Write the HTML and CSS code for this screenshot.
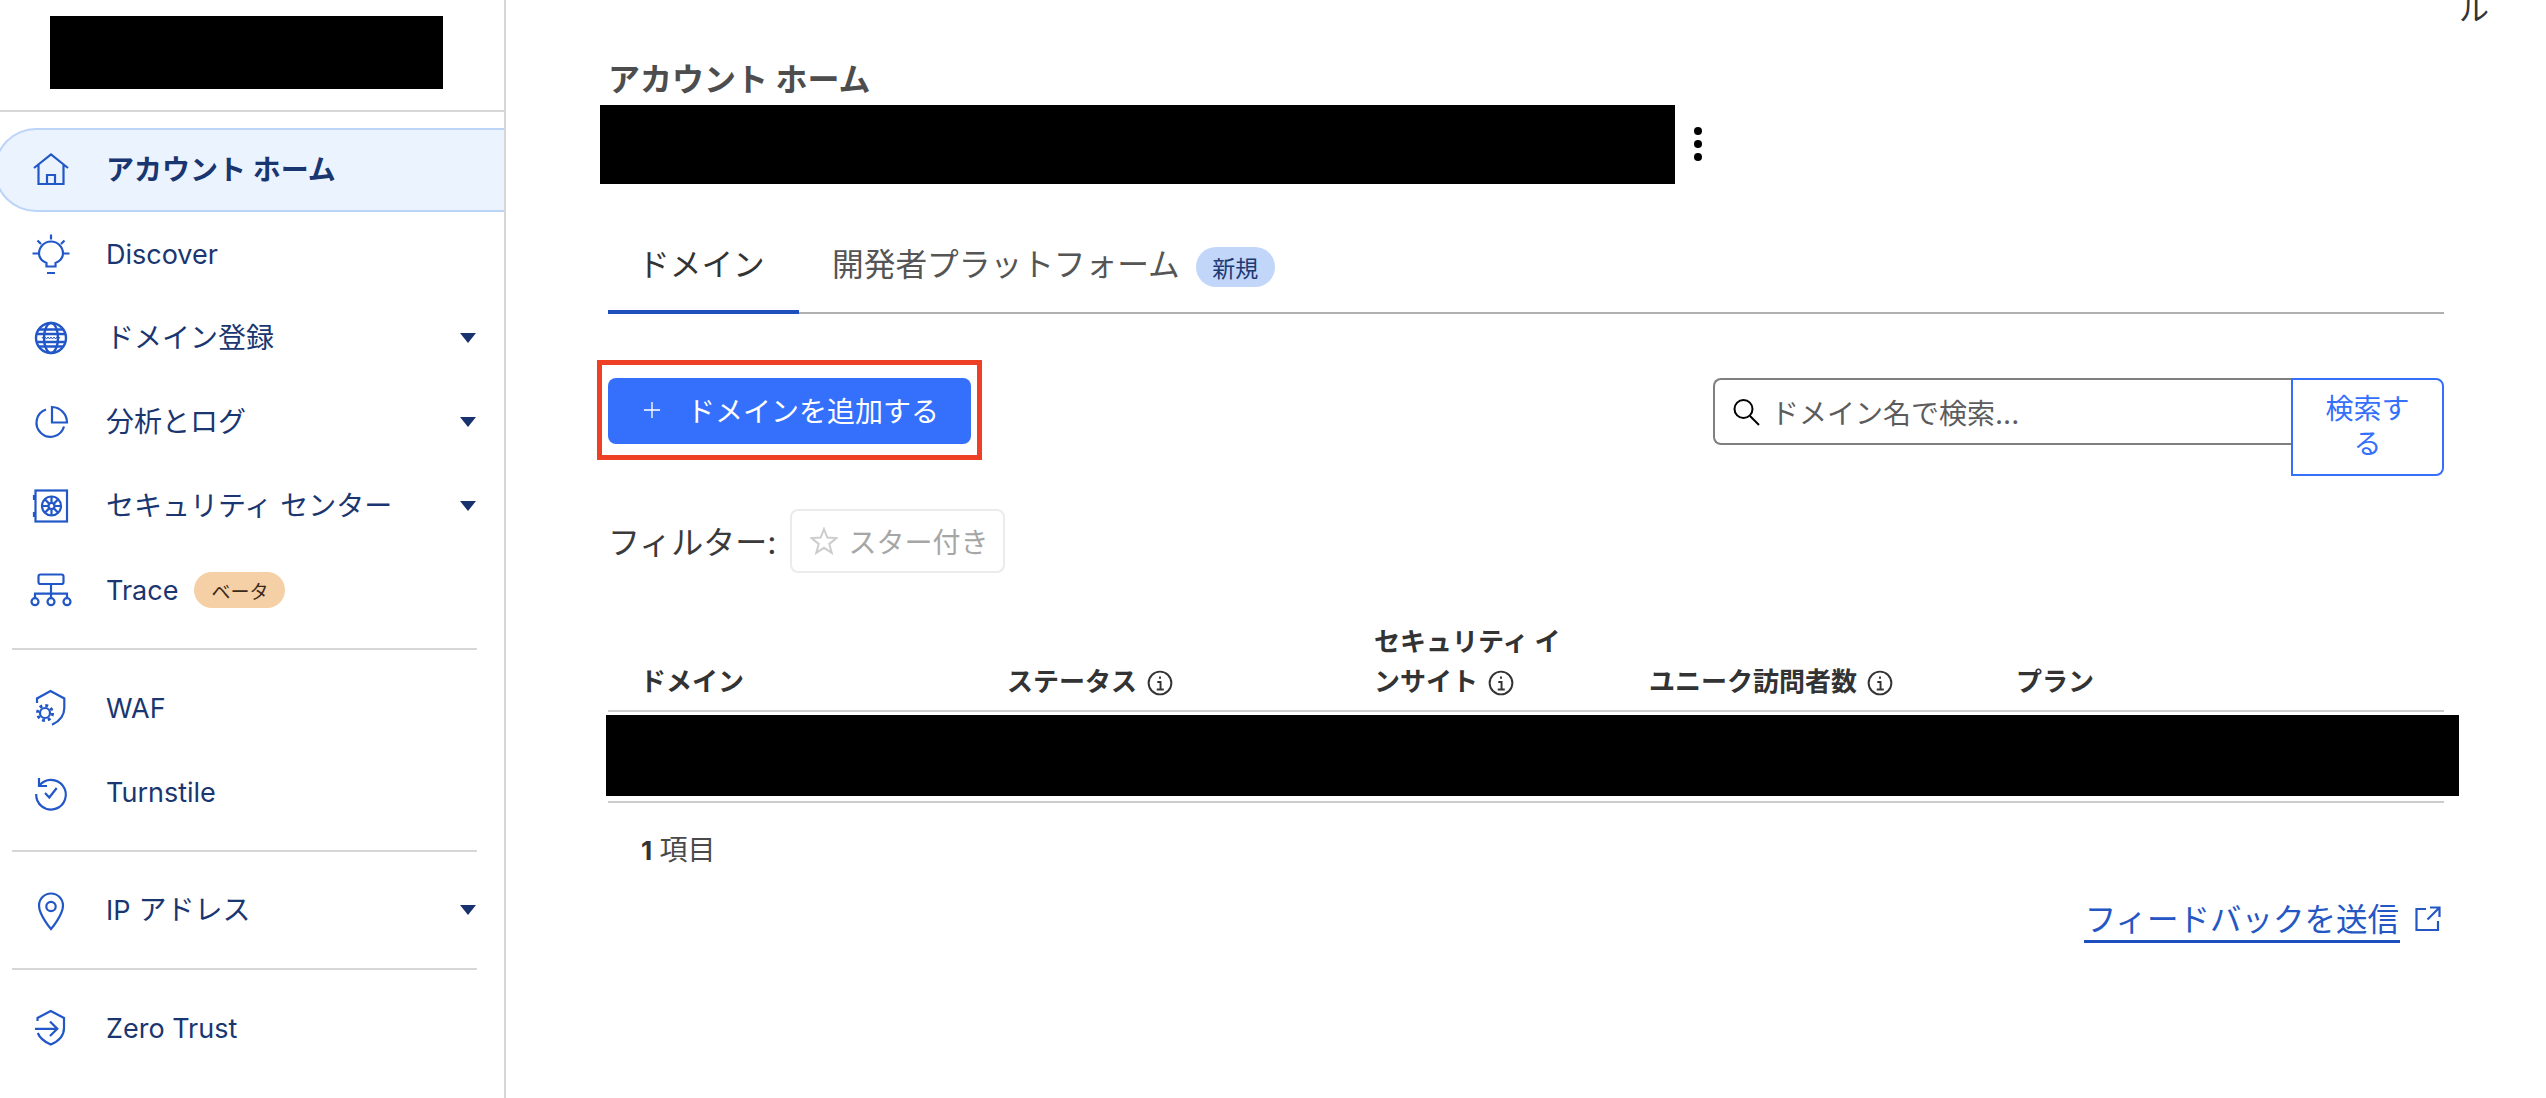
FILE: index.html
```html
<!DOCTYPE html>
<html lang="ja">
<head>
<meta charset="utf-8">
<title>アカウント ホーム</title>
<link rel="stylesheet" href="styles.css">
</head>
<body>
<div class="app">
  <aside class="sidebar">
    <div class="logo-wrap"><div class="redact logo"></div></div>
    <nav class="nav">
      <a class="nav-item active">
        <svg class="nav-icon" viewBox="0 0 44 44"><path d="M5 20 22 6.500 39 20M9.500 17V36H34.500V17M18 36V27H26V36"/></svg>
        <span class="nav-label">アカウント ホーム</span>
      </a>
      <a class="nav-item">
        <svg class="nav-icon" viewBox="0 0 44 44"><path d="M17.500 34.500V31C13 29 10 26 10 21.500A12 12 0 0 1 34 21.500C34 26 31 29 26.500 31V34.500ZM18 41H26M22 2.500V7.500M3.500 21.500H9M35 21.500H40.500M8.500 8.500 12 12M35.500 8.500 32 12"/></svg>
        <span class="nav-label latin">Discover</span>
      </a>
      <a class="nav-item">
        <svg class="nav-icon heavy" viewBox="0 0 44 44"><circle cx="22" cy="22" r="15"/><ellipse cx="22" cy="22" rx="7" ry="15"/><path d="M10 13.500H34M10 30.500H34M7 18H37M7 26H37"/><path class="thin" d="M13 21 14.500 23 16 21 17.500 23 19 21 20.500 23 22 21 23.500 23 25 21 26.500 23 28 21 29.500 23 31 21"/></svg>
        <span class="nav-label">ドメイン登録</span>
        <span class="caret"></span>
      </a>
      <a class="nav-item">
        <svg class="nav-icon" viewBox="0 0 44 44"><path d="M23 22.500V7A15.500 15.500 0 0 1 38 22.500ZM17 9.500A14 14 0 1 0 35 26.500"/></svg>
        <span class="nav-label">分析とログ</span>
        <span class="caret"></span>
      </a>
      <a class="nav-item">
        <svg class="nav-icon" viewBox="0 0 44 44"><rect x="6.500" y="6.500" width="31.500" height="31"/><circle cx="22.500" cy="22" r="9.500"/><circle cx="22.500" cy="22" r="3"/><path d="M22.500 12.500V19M22.500 25V31.500M13 22H19.500M25.500 22H32M15.800 15.300 20.400 19.900M24.600 24.100 29.200 28.700M29.200 15.300 24.600 19.900M20.400 24.100 15.800 28.700M5 11V16M5 28V33"/></svg>
        <span class="nav-label">セキュリティ センター</span>
        <span class="caret"></span>
      </a>
      <a class="nav-item">
        <svg class="nav-icon" viewBox="0 0 44 44"><rect x="9.500" y="6.500" width="25" height="9.500" rx="2"/><path d="M22 16V30M6 30V25.700H38V30"/><circle cx="6" cy="33.700" r="3.500"/><circle cx="22" cy="33.700" r="3.500"/><circle cx="38" cy="33.700" r="3.500"/></svg>
        <span class="nav-label latin">Trace</span>
        <span class="beta">ベータ</span>
      </a>
      <div class="nav-divider"></div>
      <a class="nav-item">
        <svg class="nav-icon" viewBox="0 0 44 44"><path d="M8 17V12.500L21.500 5 35.300 12.500V22C35.300 30 30 35.500 23 38.800"/><circle cx="16" cy="27" r="5"/><circle class="teeth" cx="16" cy="27" r="7.500"/></svg>
        <span class="nav-label latin">WAF</span>
      </a>
      <a class="nav-item">
        <svg class="nav-icon" viewBox="0 0 44 44"><path d="M10 8V16H18M10 16A14.800 14.800 0 1 1 7.200 24M16 23 20.300 27.500 27.700 18"/></svg>
        <span class="nav-label latin">Turnstile</span>
      </a>
      <div class="nav-divider"></div>
      <a class="nav-item">
        <svg class="nav-icon" viewBox="0 0 44 44"><path d="M22 41C22 41 10 27 10 17.500A12 12 0 0 1 34 17.500C34 27 22 41 22 41Z"/><circle cx="22" cy="18.500" r="4.700"/></svg>
        <span class="nav-label"><span class="latin">IP</span> アドレス</span>
        <span class="caret"></span>
      </a>
      <div class="nav-divider"></div>
      <a class="nav-item last">
        <svg class="nav-icon" viewBox="0 0 44 44"><path d="M8.500 15V12L21.700 5 35 12V22C35 30 29 35.500 21.700 38.600 15 35.500 10.500 31.500 8.800 27M6 22.800H28M21 15.500 28.300 22.800 21 30"/></svg>
        <span class="nav-label latin">Zero Trust</span>
      </a>
    </nav>
  </aside>

  <main class="content">
    <span class="corner-text">ル</span>
    <h1 class="page-title">アカウント ホーム</h1>
    <div class="account-row">
      <div class="redact account-name"></div>
      <div class="kebab"><i></i><i></i><i></i></div>
    </div>

    <div class="tabs">
      <a class="tab active">ドメイン</a>
      <a class="tab">開発者プラットフォーム<span class="new-badge">新規</span></a>
    </div>

    <div class="toolbar">
      <button class="add-btn">
        <svg class="plus" viewBox="0 0 20 20"><path d="M10 1V19M1 10H19"/></svg>
        <span>ドメインを追加する</span>
        <span class="mark"></span>
      </button>
      <div class="search">
        <div class="search-input">
          <svg class="search-icon" viewBox="0 0 28 28"><circle cx="11.500" cy="11" r="9"/><path d="M18 18 27 27"/></svg>
          <span>ドメイン名で検索...</span>
        </div>
        <button class="search-btn">検索する</button>
      </div>
    </div>

    <div class="filters">
      <span class="filter-label">フィルター:</span>
      <button class="star-btn">
        <svg class="star" viewBox="0 0 28 28"><path d="M14 2 17.300 10.600 26.500 11.100 19.300 16.900 21.700 25.800 14 20.800 6.300 25.800 8.700 16.900 1.500 11.100 10.700 10.600Z"/></svg>
        <span>スター付き</span>
      </button>
    </div>

    <div class="table-head">
      <div class="th">ドメイン</div>
      <div class="th">ステータス<svg class="info" viewBox="0 0 24 24"><circle cx="12" cy="12" r="10.500"/><path d="M12 6V8M9.500 11H12.500V18M9 18H15.500"/></svg></div>
      <div class="th">セキュリティ イ<br>ンサイト<svg class="info" viewBox="0 0 24 24"><circle cx="12" cy="12" r="10.500"/><path d="M12 6V8M9.500 11H12.500V18M9 18H15.500"/></svg></div>
      <div class="th">ユニーク訪問者数<svg class="info" viewBox="0 0 24 24"><circle cx="12" cy="12" r="10.500"/><path d="M12 6V8M9.500 11H12.500V18M9 18H15.500"/></svg></div>
      <div class="th">プラン</div>
    </div>
    <div class="redact table-row"></div>
    <div class="table-end"></div>
    <div class="count"><b>1</b> <span class="count-unit">項目</span></div>

    <div class="feedback">
      <a class="feedback-link">フィードバックを送信</a>
      <svg class="external" viewBox="0 0 26 26"><path d="M11 3H1.500V24H23V15M15 1.500H24.500V11M24 2 12.500 13.500"/></svg>
    </div>
  </main>
</div>
</body>
</html>
```
FILE: styles.css
```css
* { box-sizing: border-box; }
html, body { margin: 0; height: 100%; background: #fff; overflow: hidden; }
body { font-family: Inter, "Noto Sans CJK JP", sans-serif; color: #333; }
.app { display: flex; height: 1098px; }
.redact { background: #000; }

.sidebar { width: 506px; flex: none; border-right: 2px solid #d6d6d6; overflow: hidden; }
.logo-wrap { height: 112px; padding: 16px 0 0 50px; border-bottom: 2px solid #d6d6d6; }
.logo { width: 393px; height: 73px; }
.nav { padding-top: 16px; }
.nav-item { display: flex; align-items: center; height: 84px; padding-left: 29px; color: #1a3670; position: relative; }
.nav-item.active { margin-left: -6px; background: #ebf3ff; border: 2px solid #bcd4f7; border-right: 0; border-radius: 42px 0 0 42px; padding-left: 33px; font-weight: 700; }
.nav-item.last { height: 80px; padding-top: 4px; }
.nav-icon { width: 44px; height: 44px; flex: none; fill: none; stroke: #2257c7; stroke-width: 2.200; margin-right: 33px; }
.nav-icon.heavy { stroke-width: 2.400; }
.nav-icon .thin { stroke-width: 1; }
.nav-icon .teeth { stroke-dasharray: 2.900 3; stroke-width: 3; }
.nav-label { font-size: 28px; line-height: 40px; }
.latin { font-size: 27px; }
.nav-label.latin { padding-top: 2px; }
.nav-divider { height: 2px; margin: 16px 27px 16px 12px; background: #d6d6d6; }
.caret { position: absolute; left: 460px; top: 37px; width: 0; height: 0; border-left: 8px solid transparent; border-right: 8px solid transparent; border-top: 10px solid #17326e; }
.beta { margin-left: 16px; width: 91px; height: 36px; border-radius: 18px; background: #f5cfa6; color: #3b2a1a; font-size: 19px; display: flex; align-items: center; justify-content: center; }

.content { flex: 1; min-width: 0; padding: 60px 102px 0; position: relative; }
.corner-text { position: absolute; left: 1953px; top: -11px; font-size: 30px; line-height: 40px; color: #333; }
.page-title { margin: 0 0 5px; font-size: 32px; line-height: 40px; font-weight: 700; color: #4d4d4d; }
.account-row { display: flex; align-items: center; margin-left: -8px; height: 79px; }
.account-name { width: 1075px; height: 79px; }
.kebab { display: flex; flex-direction: column; gap: 4.700px; margin: -1px 0 0 19px; }
.kebab i { display: block; width: 8px; height: 8px; border-radius: 50%; background: #000; }

.tabs { display: flex; margin-top: 36px; border-bottom: 2px solid #b0b0b0; height: 94px; }
.tab { display: flex; align-items: center; height: 94px; padding: 0 33px 11px; font-size: 31.700px; color: #555; }
.tab.active { width: 191px; padding: 0 0 7px 30px; height: 94px; border-bottom: 4px solid #1f4fbf; color: #333; }
.new-badge { margin: 11px 0 0 16px; width: 79px; height: 40px; border-radius: 20px; background: #c2d6fa; color: #1d3a72; font-size: 23px; display: flex; align-items: center; justify-content: center; }

.toolbar { display: flex; justify-content: space-between; align-items: flex-start; margin-top: 64px; }
button { font-family: inherit; padding: 0; margin: 0; background: none; border: 0; }
.add-btn { position: relative; display: flex; align-items: center; width: 363px; height: 66px; padding: 0 0 2px 35px; background: #3470fb; border-radius: 8px; color: #fff; font-size: 28px; }
.plus { width: 18px; height: 18px; margin-right: 26px; fill: none; stroke: #fff; stroke-width: 1.500; }
.mark { position: absolute; left: -11px; right: -11px; top: -18px; bottom: -16px; border: 5px solid #ed4024; }
.search { display: flex; align-items: flex-start; }
.search-input { display: flex; align-items: center; width: 578px; height: 67px; padding: 0 0 0 17px; border: 2px solid #7f7f7f; border-right: 0; border-radius: 8px 0 0 8px; color: #5c5c5c; font-size: 28px; }
.search-icon { width: 28px; height: 28px; margin-right: 11px; fill: none; stroke: #000; stroke-width: 2; }
.search-btn { width: 153px; height: 98px; padding: 0 30px; border: 2px solid #3470fb; border-radius: 0 8px 8px 0; color: #3470fb; font-size: 28px; line-height: 35px; text-align: center; }

.filters { display: flex; align-items: center; gap: 13px; margin-top: 33px; }
.filter-label { font-size: 32px; color: #3a3a3a; padding-bottom: 2px; }
.star-btn { display: flex; align-items: center; width: 215px; height: 64px; padding-left: 18px; gap: 11px; border: 2px solid #ebebeb; border-radius: 8px; color: #a6a6a6; font-size: 28px; }
.star { width: 28px; height: 28px; fill: none; stroke: #ccc; stroke-width: 2; }

.table-head { display: grid; grid-template-columns: 367px 367px 275px 367px 1fr; align-items: end; margin-top: 49px; padding-bottom: 8px; border-bottom: 2px solid #ccc; }
.th { padding-left: 32px; font-size: 26px; line-height: 40px; font-weight: 700; color: #333; }
.info { width: 26px; height: 26px; margin-left: 10px; vertical-align: -5px; fill: none; stroke: #333; stroke-width: 1.800; }
.table-row { height: 81px; margin: 3px -15px 0 -2px; }
.table-end { height: 2px; margin-top: 5px; background: #ccc; }
.count { margin-top: 27px; padding-left: 33px; font-size: 26px; line-height: 40px; color: #4a4a4a; }
.count b { color: #333; }
.count-unit { font-size: 28px; }

.feedback { display: flex; justify-content: flex-end; align-items: flex-start; margin-top: 28px; }
.feedback-link { height: 44px; padding: 0 1px; font-size: 31.500px; line-height: 41px; color: #2557c4; border-bottom: 3px solid #1f4fbf; }
.external { width: 26px; height: 26px; margin: 7px 3px 0 15px; fill: none; stroke: #2557c4; stroke-width: 2.200; }
```
